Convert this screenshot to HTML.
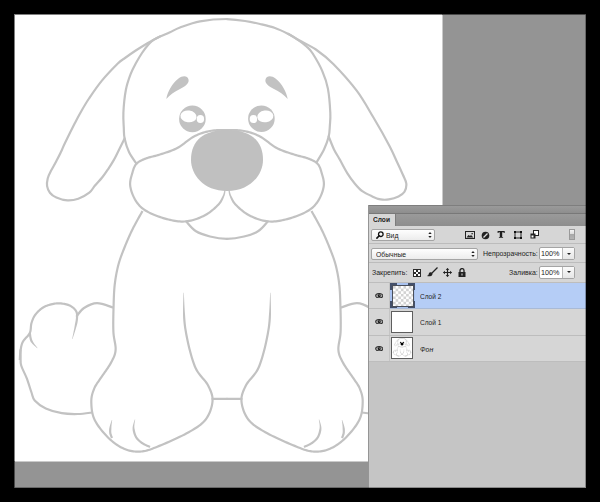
<!DOCTYPE html>
<html><head><meta charset="utf-8">
<style>
*{margin:0;padding:0;box-sizing:border-box}
html,body{width:600px;height:502px;overflow:hidden;background:#000;font-family:"Liberation Sans",sans-serif}
.a{position:absolute}
#ws{left:14px;top:14px;width:572px;height:474px;background:#949494}
#cv{left:14px;top:14px;width:428px;height:447px;background:#fff}
#dog{left:0;top:0}
#panel{left:368px;top:205px;width:218px;height:283px;background:#c5c5c5;overflow:hidden}
#panel .t{position:absolute;white-space:nowrap;color:#222;font-size:7.5px;line-height:10px;transform-origin:0 0}
.box{position:absolute;border:1px solid #a4a4a4;border-radius:2px;background:linear-gradient(#fefefe,#ececec)}
.sep{position:absolute;left:1px;width:217px;height:1px;background:#bcbcbc}
.row{position:absolute;left:1px;width:217px;height:26px;background:#d6d6d6;border-bottom:1px solid #bdbdbd}
.eyecol{position:absolute;left:0;top:0;width:21px;height:25px;background:#d6d6d6;border-right:1px solid #c4c4c4}
.thumb{position:absolute;left:22px;top:2px;width:22px;height:22px;border:1px solid #5e5e5e;background:#fff;overflow:hidden}
.eye{position:absolute;left:5.5px;top:9.5px;width:8.5px;height:5.5px}
#wrap{position:absolute;left:0;top:0;width:600px;height:502px;background:#000}
</style></head><body><div id="wrap">
<div class="a" id="ws"></div>
<div class="a" id="cv"></div>
<svg class="a" id="dog" width="600" height="502" viewBox="0 0 600 502">
<defs><clipPath id="cp"><rect x="15" y="15" width="427" height="446"/></clipPath>
<g id="half">
<path d="M227.00,128.90 L225.58,128.90 L224.15,128.90 L222.72,128.90 L221.28,128.92 L219.84,128.95 L218.39,128.99 L216.95,129.06 L215.51,129.16 L214.07,129.29 L212.63,129.46 L211.21,129.67 L209.79,129.92 L208.40,130.21 L207.03,130.52 L205.67,130.85 L204.32,131.22 L202.97,131.62 L201.63,132.05 L200.29,132.52 L198.94,133.03 L197.60,133.59 L196.24,134.18 L194.87,134.83 L193.48,135.53 L192.07,136.32 L190.65,137.21 L189.24,138.18 L187.83,139.20 L186.43,140.25 L185.02,141.33 L183.63,142.40 L182.24,143.45 L180.86,144.45 L179.48,145.40 L178.13,146.26 L176.78,147.03 L175.42,147.73 L174.04,148.37 L172.65,148.98 L171.26,149.54 L169.86,150.07 L168.46,150.57 L167.07,151.04 L165.68,151.50 L164.30,151.95 L162.93,152.38 L161.58,152.82 L160.26,153.25 L158.96,153.67 L157.67,154.05 L156.37,154.41 L155.08,154.75 L153.79,155.08 L152.52,155.40 L151.27,155.72 L150.05,156.04 L148.85,156.37 L147.69,156.72 L146.57,157.08 L145.51,157.47 L144.51,157.86 L143.56,158.24 L142.63,158.62 L141.74,159.00 L140.88,159.39 L140.04,159.80 L139.24,160.23 L138.46,160.69 L137.72,161.19 L137.01,161.72 L136.33,162.31 L135.69,162.95 L135.10,163.64 L134.57,164.37 L134.09,165.12 L133.66,165.90 L133.27,166.70 L132.92,167.53 L132.60,168.37 L132.31,169.23 L132.03,170.10 L131.76,170.99 L131.50,171.89 L131.24,172.79 L130.97,173.72 L130.69,174.68 L130.40,175.68 L130.11,176.70 L129.83,177.76 L129.58,178.84 L129.36,179.95 L129.18,181.09 L129.06,182.25 L129.00,183.42 L129.01,184.62 L129.11,185.82 L129.28,187.04 L129.52,188.29 L129.82,189.58 L130.17,190.88 L130.58,192.19 L131.03,193.51 L131.53,194.81 L132.07,196.10 L132.65,197.37 L133.26,198.59 L133.90,199.76 L134.56,200.88 L135.23,201.93 L135.91,202.94 L136.61,203.92 L137.34,204.87 L138.11,205.80 L138.93,206.70 L139.80,207.58 L140.74,208.44 L141.76,209.29 L142.86,210.12 L144.05,210.93 L145.34,211.74 L146.75,212.55 L148.30,213.36 L149.96,214.17 L151.71,214.96 L153.53,215.73 L155.40,216.49 L157.30,217.21 L159.21,217.90 L161.10,218.54 L162.97,219.14 L164.78,219.68 L166.52,220.16 L168.20,220.60 L169.86,221.00 L171.51,221.37 L173.15,221.70 L174.78,221.98 L176.40,222.23 L178.02,222.42 L179.64,222.56 L181.25,222.64 L182.87,222.66 L184.49,222.61 L186.11,222.49 L187.74,222.30 L189.38,222.03 L191.04,221.68 L192.69,221.27 L194.33,220.81 L195.95,220.29 L197.56,219.73 L199.13,219.13 L200.67,218.50 L202.17,217.85 L203.61,217.17 L205.01,216.48 L206.37,215.74 L207.71,214.93 L209.03,214.07 L210.31,213.18 L211.55,212.25 L212.76,211.30 L213.91,210.34 L215.01,209.38 L216.05,208.44 L217.03,207.51 L217.95,206.62 L218.79,205.76 L219.58,204.91 L220.29,204.06 L220.93,203.22 L221.50,202.38 L222.00,201.55 L222.42,200.72 L222.80,199.92 L223.15,199.15 L223.46,198.40 L223.75,197.69 L224.02,197.01 L224.28,196.35 L224.54,195.69 L224.76,195.02 L224.94,194.37 L225.08,193.74 L225.19,193.14 L225.28,192.57 L225.36,192.03 L225.41,191.54 L225.46,191.10 L225.50,190.72 L225.54,190.39 L225.59,190.13 L224.41,189.87 L224.34,190.17 L224.26,190.52 L224.19,190.91 L224.11,191.34 L224.01,191.81 L223.90,192.31 L223.77,192.83 L223.62,193.37 L223.45,193.93 L223.24,194.50 L223.00,195.07 L222.72,195.65 L222.40,196.27 L222.07,196.93 L221.73,197.61 L221.37,198.30 L220.99,199.00 L220.58,199.71 L220.12,200.44 L219.65,201.18 L219.14,201.93 L218.56,202.69 L217.93,203.46 L217.21,204.24 L216.40,205.06 L215.51,205.92 L214.56,206.82 L213.55,207.74 L212.48,208.66 L211.37,209.59 L210.21,210.50 L209.02,211.39 L207.80,212.25 L206.55,213.07 L205.28,213.83 L203.99,214.52 L202.66,215.19 L201.26,215.84 L199.81,216.48 L198.33,217.09 L196.80,217.67 L195.26,218.21 L193.69,218.70 L192.12,219.15 L190.55,219.54 L188.98,219.86 L187.43,220.12 L185.89,220.31 L184.37,220.42 L182.85,220.46 L181.32,220.44 L179.79,220.37 L178.25,220.23 L176.70,220.05 L175.13,219.81 L173.56,219.53 L171.96,219.21 L170.36,218.85 L168.73,218.46 L167.08,218.04 L165.39,217.57 L163.62,217.04 L161.79,216.45 L159.93,215.82 L158.06,215.15 L156.20,214.44 L154.37,213.70 L152.59,212.94 L150.89,212.17 L149.29,211.40 L147.81,210.62 L146.46,209.86 L145.25,209.10 L144.14,208.33 L143.13,207.56 L142.19,206.79 L141.33,205.99 L140.52,205.19 L139.77,204.36 L139.06,203.50 L138.38,202.61 L137.72,201.69 L137.08,200.72 L136.44,199.72 L135.81,198.68 L135.21,197.57 L134.64,196.42 L134.09,195.22 L133.58,194.00 L133.10,192.76 L132.67,191.51 L132.29,190.26 L131.95,189.04 L131.67,187.84 L131.45,186.68 L131.29,185.58 L131.21,184.52 L131.20,183.47 L131.25,182.42 L131.36,181.38 L131.53,180.34 L131.73,179.31 L131.97,178.29 L132.23,177.28 L132.51,176.28 L132.80,175.30 L133.08,174.34 L133.36,173.41 L133.62,172.50 L133.87,171.61 L134.13,170.75 L134.40,169.92 L134.67,169.12 L134.96,168.35 L135.28,167.61 L135.62,166.91 L135.98,166.24 L136.38,165.61 L136.82,165.01 L137.31,164.45 L137.83,163.92 L138.40,163.43 L139.00,162.98 L139.64,162.55 L140.32,162.14 L141.05,161.75 L141.81,161.38 L142.62,161.01 L143.48,160.65 L144.38,160.28 L145.32,159.91 L146.29,159.53 L147.29,159.16 L148.35,158.82 L149.46,158.49 L150.62,158.17 L151.82,157.85 L153.06,157.54 L154.34,157.21 L155.63,156.88 L156.95,156.54 L158.28,156.17 L159.61,155.77 L160.94,155.35 L162.26,154.91 L163.60,154.48 L164.97,154.04 L166.36,153.59 L167.77,153.13 L169.19,152.64 L170.62,152.13 L172.06,151.59 L173.50,151.00 L174.95,150.38 L176.39,149.70 L177.82,148.97 L179.26,148.15 L180.70,147.23 L182.13,146.25 L183.55,145.21 L184.96,144.15 L186.36,143.07 L187.76,142.01 L189.14,140.97 L190.51,139.97 L191.86,139.05 L193.19,138.21 L194.52,137.47 L195.84,136.81 L197.15,136.18 L198.46,135.61 L199.75,135.08 L201.04,134.59 L202.33,134.14 L203.62,133.72 L204.92,133.34 L206.22,132.98 L207.54,132.66 L208.87,132.36 L210.21,132.08 L211.56,131.84 L212.92,131.64 L214.29,131.48 L215.68,131.36 L217.08,131.26 L218.48,131.19 L219.89,131.15 L221.31,131.12 L222.73,131.10 L224.16,131.10 L225.58,131.10 L227.00,131.10Z" fill="#c2c2c2" stroke="none"/>
<path d="M186.4,221.6 C188.7,224.3 192.1,228.8 196.0,231.3 C199.9,233.8 204.8,235.2 210.0,236.5 C215.2,237.8 221.3,238.8 227.0,238.8"/>
<path d="M141.54,210.47 L141.06,211.32 L140.46,212.39 L139.75,213.65 L138.95,215.05 L138.08,216.59 L137.17,218.22 L136.22,219.92 L135.26,221.65 L134.31,223.40 L133.39,225.13 L132.52,226.81 L131.71,228.41 L130.95,229.98 L130.19,231.57 L129.44,233.18 L128.70,234.81 L127.97,236.44 L127.25,238.08 L126.54,239.71 L125.85,241.33 L125.18,242.94 L124.52,244.52 L123.89,246.07 L123.28,247.59 L122.69,249.07 L122.12,250.50 L121.57,251.91 L121.04,253.29 L120.52,254.66 L120.02,256.02 L119.53,257.38 L119.06,258.76 L118.61,260.15 L118.17,261.57 L117.74,263.02 L117.34,264.52 L116.94,266.04 L116.57,267.58 L116.21,269.14 L115.86,270.71 L115.54,272.30 L115.23,273.90 L114.93,275.52 L114.65,277.16 L114.39,278.82 L114.15,280.49 L113.92,282.17 L113.71,283.87 L113.52,285.58 L113.35,287.30 L113.21,289.02 L113.09,290.75 L112.98,292.49 L112.89,294.25 L112.81,296.04 L112.74,297.85 L112.67,299.70 L112.61,301.58 L112.56,303.50 L112.50,305.47 L112.44,307.52 L112.38,309.67 L112.32,311.90 L112.27,314.19 L112.22,316.51 L112.19,318.84 L112.16,321.16 L112.15,323.45 L112.16,325.69 L112.18,327.85 L112.23,329.91 L112.30,331.86 L112.43,333.71 L112.62,335.50 L112.86,337.21 L113.13,338.85 L113.41,340.43 L113.70,341.94 L113.97,343.39 L114.20,344.79 L114.39,346.14 L114.51,347.44 L114.55,348.69 L114.50,349.92 L114.38,351.11 L114.20,352.23 L113.97,353.28 L113.70,354.28 L113.38,355.25 L113.02,356.21 L112.61,357.16 L112.15,358.12 L111.66,359.12 L111.12,360.15 L110.54,361.23 L109.93,362.37 L109.27,363.56 L108.52,364.81 L107.69,366.11 L106.80,367.45 L105.86,368.81 L104.91,370.17 L103.94,371.53 L102.99,372.88 L102.05,374.19 L101.16,375.45 L100.33,376.66 L99.58,377.79 L98.90,378.82 L98.25,379.77 L97.63,380.67 L97.04,381.52 L96.46,382.34 L95.91,383.14 L95.38,383.95 L94.87,384.76 L94.39,385.61 L93.93,386.48 L93.49,387.41 L93.08,388.39 L92.69,389.38 L92.32,390.38 L91.96,391.39 L91.62,392.42 L91.31,393.47 L91.02,394.55 L90.77,395.66 L90.56,396.81 L90.39,397.99 L90.27,399.22 L90.21,400.50 L90.20,401.81 L90.23,403.16 L90.28,404.57 L90.35,406.04 L90.46,407.56 L90.62,409.11 L90.82,410.71 L91.09,412.32 L91.44,413.95 L91.86,415.59 L92.37,417.24 L92.99,418.87 L93.71,420.48 L94.56,422.10 L95.53,423.76 L96.62,425.44 L97.79,427.14 L99.04,428.83 L100.35,430.51 L101.71,432.16 L103.09,433.77 L104.48,435.33 L105.86,436.81 L107.22,438.20 L108.54,439.50 L109.85,440.71 L111.17,441.87 L112.52,442.98 L113.87,444.02 L115.23,445.02 L116.61,445.95 L117.99,446.83 L119.37,447.64 L120.75,448.40 L122.14,449.10 L123.52,449.74 L124.89,450.32 L126.27,450.84 L127.65,451.29 L129.03,451.67 L130.41,451.99 L131.78,452.25 L133.16,452.45 L134.54,452.60 L135.91,452.69 L137.28,452.74 L138.65,452.74 L140.02,452.69 L141.39,452.60 L142.72,452.46 L143.98,452.29 L145.20,452.07 L146.40,451.81 L147.59,451.49 L148.80,451.12 L150.05,450.70 L151.36,450.23 L152.76,449.69 L154.26,449.10 L155.91,448.44 L157.71,447.72 L159.73,446.90 L161.97,445.98 L164.39,444.97 L166.94,443.88 L169.59,442.73 L172.29,441.54 L174.99,440.31 L177.67,439.07 L180.27,437.83 L182.76,436.61 L185.10,435.41 L187.23,434.26 L189.20,433.17 L191.10,432.10 L192.93,431.04 L194.69,430.00 L196.38,428.95 L198.00,427.89 L199.55,426.81 L201.03,425.69 L202.43,424.53 L203.75,423.32 L204.99,422.04 L206.16,420.69 L207.24,419.26 L208.23,417.74 L209.14,416.17 L209.97,414.54 L210.71,412.88 L211.38,411.20 L211.95,409.51 L212.45,407.82 L212.86,406.15 L213.19,404.52 L213.44,402.92 L213.60,401.38 L213.66,399.89 L213.63,398.45 L213.49,397.05 L213.27,395.68 L212.96,394.33 L212.58,393.00 L212.12,391.68 L211.60,390.36 L211.02,389.02 L210.39,387.65 L209.71,386.25 L208.97,384.78 L208.12,383.29 L207.14,381.84 L206.06,380.46 L204.91,379.10 L203.72,377.73 L202.50,376.32 L201.27,374.86 L200.06,373.30 L198.88,371.63 L197.75,369.80 L196.69,367.80 L195.72,365.59 L194.79,363.10 L193.85,360.35 L192.93,357.39 L192.02,354.26 L191.14,350.99 L190.29,347.63 L189.48,344.21 L188.72,340.77 L188.01,337.36 L187.36,334.01 L186.79,330.75 L186.29,327.64 L185.88,324.53 L185.55,321.27 L185.30,317.91 L185.04,314.52 L184.78,311.15 L184.57,307.85 L184.40,304.67 L184.26,301.68 L184.14,298.93 L184.02,296.48 L183.92,294.38 L183.80,292.69 L183.40,292.71 L183.39,294.39 L183.34,296.49 L183.27,298.94 L183.19,301.69 L183.10,304.69 L183.04,307.88 L183.00,311.21 L183.00,314.62 L183.11,318.05 L183.36,321.46 L183.69,324.78 L184.11,327.96 L184.62,331.12 L185.20,334.41 L185.85,337.79 L186.57,341.23 L187.33,344.70 L188.15,348.15 L189.01,351.54 L189.90,354.85 L190.82,358.02 L191.76,361.03 L192.71,363.84 L193.68,366.41 L194.71,368.76 L195.84,370.89 L197.05,372.84 L198.29,374.61 L199.56,376.24 L200.83,377.75 L202.06,379.17 L203.24,380.53 L204.35,381.84 L205.36,383.14 L206.25,384.45 L207.03,385.82 L207.73,387.23 L208.40,388.60 L209.01,389.92 L209.57,391.20 L210.06,392.45 L210.48,393.67 L210.84,394.89 L211.11,396.10 L211.31,397.33 L211.43,398.58 L211.46,399.87 L211.40,401.22 L211.26,402.64 L211.03,404.13 L210.72,405.67 L210.33,407.25 L209.86,408.84 L209.31,410.44 L208.69,412.03 L207.99,413.59 L207.21,415.12 L206.36,416.59 L205.44,417.99 L204.44,419.31 L203.37,420.55 L202.22,421.74 L200.98,422.87 L199.66,423.97 L198.26,425.03 L196.77,426.07 L195.20,427.10 L193.55,428.12 L191.82,429.14 L190.01,430.18 L188.13,431.25 L186.17,432.34 L184.07,433.47 L181.78,434.64 L179.32,435.85 L176.74,437.08 L174.08,438.31 L171.39,439.53 L168.71,440.71 L166.07,441.86 L163.53,442.94 L161.13,443.95 L158.90,444.87 L156.89,445.68 L155.09,446.40 L153.45,447.06 L151.96,447.64 L150.59,448.17 L149.32,448.63 L148.13,449.03 L146.99,449.37 L145.88,449.67 L144.77,449.92 L143.64,450.12 L142.46,450.28 L141.21,450.40 L139.91,450.49 L138.61,450.54 L137.32,450.54 L136.02,450.50 L134.73,450.41 L133.44,450.27 L132.15,450.08 L130.86,449.84 L129.57,449.54 L128.28,449.18 L127.00,448.76 L125.71,448.28 L124.41,447.73 L123.10,447.12 L121.78,446.46 L120.46,445.73 L119.14,444.95 L117.82,444.11 L116.50,443.22 L115.19,442.26 L113.89,441.26 L112.60,440.19 L111.32,439.08 L110.06,437.90 L108.78,436.65 L107.45,435.29 L106.10,433.84 L104.74,432.32 L103.39,430.75 L102.07,429.14 L100.79,427.50 L99.58,425.86 L98.44,424.22 L97.41,422.60 L96.48,421.03 L95.69,419.52 L95.02,418.03 L94.45,416.52 L93.97,414.99 L93.58,413.45 L93.26,411.91 L93.00,410.38 L92.80,408.86 L92.66,407.37 L92.55,405.90 L92.48,404.48 L92.43,403.10 L92.40,401.79 L92.40,400.56 L92.46,399.38 L92.57,398.25 L92.73,397.16 L92.92,396.10 L93.16,395.07 L93.42,394.07 L93.72,393.08 L94.04,392.10 L94.39,391.13 L94.75,390.17 L95.12,389.21 L95.50,388.31 L95.90,387.47 L96.32,386.67 L96.76,385.89 L97.24,385.13 L97.74,384.37 L98.27,383.59 L98.84,382.78 L99.44,381.93 L100.07,381.02 L100.73,380.05 L101.42,379.01 L102.16,377.89 L102.97,376.71 L103.85,375.46 L104.78,374.15 L105.74,372.81 L106.71,371.44 L107.67,370.06 L108.62,368.68 L109.53,367.31 L110.38,365.97 L111.17,364.67 L111.87,363.43 L112.48,362.27 L113.07,361.17 L113.62,360.12 L114.13,359.08 L114.61,358.06 L115.06,357.03 L115.46,355.99 L115.81,354.91 L116.11,353.80 L116.36,352.63 L116.56,351.40 L116.70,350.08 L116.75,348.70 L116.70,347.30 L116.57,345.89 L116.38,344.46 L116.13,343.01 L115.86,341.54 L115.58,340.03 L115.29,338.47 L115.03,336.88 L114.80,335.23 L114.62,333.52 L114.50,331.74 L114.43,329.84 L114.38,327.81 L114.36,325.67 L114.35,323.46 L114.36,321.18 L114.39,318.87 L114.42,316.55 L114.47,314.23 L114.52,311.95 L114.58,309.73 L114.64,307.58 L114.70,305.53 L114.76,303.57 L114.81,301.65 L114.87,299.77 L114.94,297.93 L115.01,296.13 L115.09,294.36 L115.18,292.61 L115.28,290.89 L115.40,289.19 L115.55,287.49 L115.71,285.81 L115.89,284.13 L116.10,282.45 L116.32,280.79 L116.56,279.15 L116.82,277.52 L117.10,275.91 L117.39,274.31 L117.69,272.73 L118.02,271.17 L118.36,269.62 L118.71,268.09 L119.08,266.58 L119.46,265.08 L119.86,263.62 L120.27,262.20 L120.70,260.82 L121.15,259.46 L121.61,258.11 L122.08,256.77 L122.58,255.43 L123.09,254.07 L123.62,252.71 L124.17,251.31 L124.74,249.88 L125.32,248.41 L125.93,246.90 L126.56,245.35 L127.21,243.78 L127.88,242.19 L128.56,240.58 L129.26,238.96 L129.98,237.34 L130.71,235.72 L131.44,234.11 L132.19,232.51 L132.93,230.93 L133.69,229.39 L134.48,227.81 L135.34,226.15 L136.25,224.44 L137.19,222.71 L138.14,220.98 L139.08,219.29 L140.00,217.67 L140.86,216.14 L141.66,214.73 L142.38,213.47 L142.98,212.40 L143.46,211.53Z" fill="#c2c2c2" stroke="none"/>
<path d="M212.5,398.9 C214.9,398.9 224.6,398.9 227.0,398.9"/>
<path d="M76.8,316.0 C78.0,314.7 80.6,310.1 84.0,308.0 C87.4,305.9 92.2,303.3 97.0,303.2 C101.8,303.1 110.3,306.8 113.0,307.5"/>
<path d="M20.90,360.06 L20.95,359.15 L21.00,358.26 L21.04,357.38 L21.08,356.52 L21.13,355.68 L21.18,354.85 L21.23,354.04 L21.30,353.24 L21.37,352.46 L21.46,351.69 L21.56,350.93 L21.69,350.18 L21.81,349.42 L21.94,348.68 L22.07,347.97 L22.20,347.27 L22.34,346.59 L22.49,345.92 L22.67,345.27 L22.86,344.62 L23.08,343.97 L23.34,343.33 L23.63,342.68 L23.96,342.04 L24.34,341.41 L24.81,340.78 L25.34,340.13 L25.94,339.47 L26.58,338.79 L27.24,338.10 L27.91,337.40 L28.57,336.67 L29.21,335.92 L29.81,335.14 L30.34,334.32 L30.80,333.46 L31.15,332.57 L31.42,331.67 L31.61,330.77 L31.75,329.87 L31.85,328.97 L31.92,328.08 L31.98,327.22 L32.05,326.37 L32.13,325.55 L32.23,324.77 L32.37,324.03 L32.56,323.30 L32.79,322.57 L33.03,321.83 L33.27,321.11 L33.53,320.41 L33.79,319.72 L34.08,319.04 L34.39,318.37 L34.72,317.72 L35.08,317.08 L35.47,316.44 L35.90,315.81 L36.37,315.17 L36.89,314.52 L37.44,313.86 L38.03,313.20 L38.64,312.54 L39.28,311.89 L39.95,311.25 L40.65,310.63 L41.37,310.04 L42.12,309.47 L42.89,308.93 L43.69,308.43 L44.51,307.97 L45.38,307.54 L46.31,307.12 L47.29,306.72 L48.30,306.35 L49.35,306.00 L50.41,305.68 L51.49,305.39 L52.58,305.13 L53.66,304.91 L54.72,304.73 L55.77,304.59 L56.78,304.50 L57.79,304.45 L58.82,304.44 L59.87,304.48 L60.93,304.55 L61.99,304.66 L63.04,304.80 L64.07,304.97 L65.07,305.18 L66.03,305.41 L66.95,305.66 L67.81,305.93 L68.59,306.22 L69.32,306.54 L70.02,306.89 L70.68,307.28 L71.32,307.69 L71.92,308.14 L72.49,308.61 L73.02,309.09 L73.51,309.59 L73.96,310.09 L74.37,310.59 L74.74,311.09 L75.06,311.58 L75.32,312.03 L75.52,312.48 L75.68,312.93 L75.80,313.39 L75.89,313.87 L75.95,314.37 L75.98,314.89 L75.99,315.45 L75.98,316.03 L75.96,316.64 L75.93,317.28 L75.90,317.94 L75.86,318.60 L75.79,319.28 L75.71,319.98 L75.60,320.70 L75.47,321.44 L75.32,322.20 L75.16,322.98 L75.02,323.79 L74.88,324.62 L74.74,325.46 L74.59,326.33 L74.45,327.21 L74.29,328.14 L74.10,329.16 L73.89,330.25 L73.67,331.37 L73.44,332.52 L73.21,333.66 L72.98,334.76 L72.76,335.81 L72.56,336.78 L72.38,337.64 L72.22,338.37 L72.11,338.95 L72.49,339.05 L72.67,338.49 L72.91,337.78 L73.18,336.95 L73.49,336.01 L73.83,334.99 L74.18,333.92 L74.54,332.81 L74.90,331.69 L75.25,330.59 L75.58,329.52 L75.88,328.52 L76.15,327.59 L76.40,326.74 L76.64,325.89 L76.88,325.06 L77.11,324.24 L77.31,323.43 L77.48,322.63 L77.63,321.83 L77.77,321.05 L77.88,320.28 L77.98,319.53 L78.05,318.78 L78.10,318.06 L78.13,317.38 L78.16,316.72 L78.18,316.08 L78.19,315.44 L78.18,314.81 L78.14,314.18 L78.07,313.55 L77.95,312.92 L77.79,312.29 L77.57,311.66 L77.28,311.03 L76.94,310.42 L76.54,309.83 L76.11,309.24 L75.63,308.66 L75.11,308.07 L74.54,307.50 L73.93,306.94 L73.27,306.41 L72.58,305.89 L71.84,305.41 L71.07,304.95 L70.25,304.54 L69.41,304.18 L68.52,303.85 L67.57,303.55 L66.58,303.28 L65.54,303.03 L64.47,302.81 L63.37,302.63 L62.25,302.47 L61.12,302.36 L59.98,302.28 L58.85,302.24 L57.73,302.25 L56.62,302.30 L55.52,302.41 L54.39,302.55 L53.25,302.75 L52.10,302.98 L50.95,303.25 L49.81,303.56 L48.68,303.90 L47.57,304.27 L46.49,304.67 L45.44,305.10 L44.44,305.55 L43.49,306.03 L42.57,306.54 L41.68,307.09 L40.83,307.69 L40.01,308.31 L39.22,308.96 L38.46,309.63 L37.74,310.32 L37.05,311.02 L36.39,311.72 L35.77,312.43 L35.19,313.13 L34.63,313.83 L34.11,314.53 L33.62,315.24 L33.18,315.96 L32.78,316.69 L32.41,317.42 L32.07,318.15 L31.76,318.89 L31.47,319.63 L31.19,320.38 L30.94,321.14 L30.69,321.90 L30.44,322.70 L30.22,323.55 L30.06,324.42 L29.94,325.31 L29.86,326.18 L29.79,327.06 L29.73,327.92 L29.66,328.76 L29.57,329.58 L29.45,330.37 L29.29,331.13 L29.07,331.86 L28.80,332.54 L28.45,333.20 L28.01,333.87 L27.50,334.54 L26.92,335.22 L26.30,335.90 L25.65,336.58 L24.98,337.28 L24.32,337.98 L23.68,338.69 L23.07,339.42 L22.52,340.18 L22.04,340.96 L21.65,341.73 L21.31,342.47 L21.02,343.21 L20.77,343.94 L20.55,344.67 L20.36,345.39 L20.19,346.12 L20.04,346.84 L19.90,347.57 L19.77,348.31 L19.65,349.05 L19.51,349.82 L19.39,350.61 L19.28,351.42 L19.19,352.23 L19.11,353.05 L19.04,353.88 L18.98,354.71 L18.93,355.55 L18.89,356.41 L18.84,357.27 L18.80,358.14 L18.75,359.03 L18.70,359.94Z" fill="#c2c2c2" stroke="none"/>
<path d="M28.72,333.19 L28.78,333.56 L28.85,334.02 L28.92,334.59 L29.00,335.25 L29.09,335.96 L29.20,336.72 L29.33,337.52 L29.49,338.33 L29.68,339.15 L29.91,339.96 L30.19,340.74 L30.51,341.49 L30.96,342.19 L31.50,342.87 L32.10,343.54 L32.73,344.20 L33.39,344.84 L34.05,345.46 L34.70,346.05 L35.32,346.60 L35.89,347.10 L36.40,347.54 L36.82,347.92 L37.15,348.23 L37.45,347.97 L37.19,347.60 L36.84,347.13 L36.43,346.59 L35.97,345.99 L35.48,345.33 L34.96,344.64 L34.45,343.92 L33.96,343.20 L33.50,342.47 L33.09,341.77 L32.75,341.10 L32.49,340.51 L32.23,339.94 L32.01,339.29 L31.81,338.60 L31.64,337.87 L31.50,337.13 L31.37,336.39 L31.27,335.66 L31.18,334.97 L31.10,334.32 L31.03,333.74 L30.96,333.22 L30.88,332.81Z" fill="#c2c2c2" stroke="none"/>
<path d="M20.5,350.0 C20.5,351.2 20.5,354.4 20.6,357.0 C20.7,359.6 20.2,362.0 21.2,365.5 C22.2,369.0 25.0,373.7 26.7,378.2 C28.4,382.7 30.2,388.8 31.5,392.5 C32.8,396.2 32.3,397.8 34.7,400.5 C37.1,403.2 41.3,406.4 45.8,408.5 C50.3,410.6 56.5,412.3 61.8,413.2 C67.1,414.1 72.7,414.1 77.7,414.0 C82.7,413.9 89.6,412.8 92.0,412.5"/>
<path d="M111.80,419.96 L111.69,420.29 L111.55,420.71 L111.38,421.20 L111.18,421.76 L110.97,422.37 L110.75,423.01 L110.53,423.67 L110.31,424.34 L110.10,425.01 L109.91,425.67 L109.74,426.29 L109.59,426.88 L109.47,427.42 L109.35,427.96 L109.24,428.49 L109.17,429.02 L109.13,429.55 L109.10,430.08 L109.08,430.60 L109.08,431.11 L109.09,431.63 L109.11,432.14 L109.15,432.65 L109.21,433.16 L109.30,433.69 L109.43,434.22 L109.58,434.76 L109.75,435.28 L109.93,435.79 L110.11,436.27 L110.30,436.74 L110.47,437.16 L110.64,437.55 L110.78,437.89 L110.89,438.16 L110.97,438.38 L113.03,437.62 L112.94,437.36 L112.81,437.05 L112.66,436.70 L112.50,436.32 L112.34,435.91 L112.16,435.48 L111.99,435.03 L111.83,434.57 L111.68,434.12 L111.56,433.67 L111.46,433.25 L111.39,432.84 L111.34,432.43 L111.31,432.00 L111.29,431.56 L111.28,431.11 L111.28,430.65 L111.30,430.17 L111.33,429.69 L111.36,429.20 L111.39,428.70 L111.39,428.18 L111.40,427.66 L111.41,427.12 L111.43,426.57 L111.47,425.95 L111.53,425.30 L111.60,424.62 L111.68,423.93 L111.77,423.24 L111.86,422.58 L111.94,421.94 L112.02,421.36 L112.09,420.84 L112.15,420.39 L112.20,420.04Z" fill="#c2c2c2" stroke="none"/>
<path d="M134.80,419.46 L134.69,419.86 L134.52,420.35 L134.32,420.93 L134.09,421.59 L133.85,422.31 L133.60,423.07 L133.35,423.88 L133.12,424.70 L132.92,425.54 L132.76,426.39 L132.64,427.23 L132.59,428.04 L132.59,428.83 L132.62,429.64 L132.68,430.47 L132.83,431.29 L133.01,432.12 L133.22,432.94 L133.46,433.76 L133.72,434.57 L134.01,435.35 L134.33,436.11 L134.67,436.85 L135.04,437.54 L135.45,438.21 L135.89,438.84 L136.35,439.45 L136.85,440.03 L137.36,440.58 L137.90,441.11 L138.45,441.62 L139.02,442.10 L139.59,442.57 L140.18,443.03 L140.77,443.47 L141.37,443.90 L142.03,444.35 L142.76,444.78 L143.53,445.21 L144.32,445.61 L145.12,446.00 L145.91,446.37 L146.68,446.72 L147.41,447.04 L148.07,447.34 L148.66,447.59 L149.15,447.81 L149.53,447.99 L150.47,446.01 L150.07,445.81 L149.55,445.58 L148.96,445.32 L148.30,445.03 L147.58,444.71 L146.84,444.38 L146.07,444.02 L145.31,443.65 L144.56,443.26 L143.86,442.87 L143.21,442.49 L142.63,442.10 L142.07,441.69 L141.51,441.28 L140.96,440.85 L140.43,440.42 L139.91,439.97 L139.41,439.52 L138.94,439.05 L138.49,438.56 L138.06,438.06 L137.66,437.55 L137.29,437.01 L136.96,436.46 L136.64,435.86 L136.34,435.22 L136.06,434.55 L135.80,433.84 L135.56,433.11 L135.34,432.37 L135.15,431.61 L134.99,430.86 L134.84,430.10 L134.67,429.37 L134.52,428.65 L134.41,427.96 L134.34,427.27 L134.32,426.52 L134.34,425.74 L134.40,424.93 L134.48,424.11 L134.59,423.30 L134.71,422.52 L134.84,421.78 L134.95,421.10 L135.06,420.49 L135.14,419.96 L135.20,419.54Z" fill="#c2c2c2" stroke="none"/>
</g>
<g id="dogstroke"><use href="#half"/><use href="#half" transform="translate(454,0) scale(-1,1)"/>
<path d="M160.0,36.5 C157.2,37.8 155.0,38.8 153.0,40.2 C151.0,41.6 149.8,42.9 148.0,45.0 C146.2,47.1 144.0,50.0 142.0,53.0 C140.0,56.0 137.9,59.5 136.0,63.0 C134.1,66.5 132.3,69.7 130.6,74.2 C128.9,78.7 127.0,83.8 125.8,90.2 C124.6,96.6 123.7,106.2 123.4,112.5 C123.1,118.8 123.6,123.7 123.8,128.0 C124.0,132.3 123.7,134.4 124.6,138.4 C125.5,142.4 127.0,147.8 129.0,152.0 C131.0,156.2 135.2,161.8 136.5,163.7"/>
<path d="M227.0,19.0 C218.0,19.0 207.8,19.9 200.0,21.3 C192.2,22.7 185.0,25.7 180.0,27.5 C175.0,29.3 173.3,30.8 170.0,32.3 C166.7,33.8 162.8,35.2 160.0,36.5 C157.2,37.8 155.5,38.8 153.0,40.2 C150.5,41.6 148.0,42.9 145.0,44.7 C142.0,46.5 138.3,48.8 135.0,51.0 C131.7,53.2 127.9,55.9 125.0,58.0 C122.1,60.1 121.6,59.7 117.8,63.5 C114.0,67.3 106.7,74.8 101.9,80.6 C97.1,86.4 92.7,93.0 89.0,98.5 C85.3,104.0 82.3,109.4 80.0,113.5 C77.7,117.6 77.4,118.2 74.9,123.1 C72.4,128.0 67.3,138.2 65.1,142.7 C62.9,147.2 63.3,146.9 61.9,150.0 C60.5,153.1 58.2,157.5 56.4,161.0 C54.6,164.5 52.5,167.9 51.0,170.8 C49.5,173.7 48.4,175.9 47.7,178.5 C47.1,181.1 46.7,183.7 47.1,186.1 C47.5,188.5 48.4,190.8 49.9,192.7 C51.4,194.6 53.5,196.3 56.4,197.6 C59.3,198.9 63.8,200.2 67.4,200.4 C71.1,200.6 74.7,200.0 78.3,198.7 C81.9,197.4 86.5,194.9 89.3,192.7 C92.1,190.5 92.9,188.0 95.0,185.5 C97.1,183.0 99.8,180.5 101.9,177.8 C104.1,175.1 105.9,172.4 107.9,169.4 C109.9,166.4 111.9,163.5 113.9,159.9 C115.9,156.3 118.1,151.5 119.9,147.9 C121.7,144.3 123.8,140.0 124.6,138.4"/>
<path d="M288.0,33.8 C292.0,35.9 295.9,38.5 299.0,40.6 C302.1,42.7 304.2,44.4 306.5,46.5 C308.8,48.6 310.1,49.4 312.7,53.5 C315.3,57.6 319.8,65.2 322.3,71.1 C324.8,76.9 326.6,81.7 327.9,88.6 C329.2,95.5 330.0,106.4 330.3,112.5 C330.6,118.6 330.2,121.0 329.9,125.0 C329.6,129.0 329.7,132.4 328.7,136.5 C327.7,140.6 326.0,145.2 324.0,149.5 C322.0,153.8 317.9,159.9 316.7,162.0"/>
<path d="M227.0,19.2 C233.0,19.5 239.5,20.2 245.0,21.0 C250.5,21.8 255.0,22.8 260.0,24.0 C265.0,25.2 270.3,26.4 275.0,28.0 C279.7,29.6 284.0,31.8 288.0,33.8 C292.0,35.8 294.4,37.6 299.0,40.2 C303.6,42.8 310.2,45.5 315.9,49.5 C321.6,53.5 326.5,57.1 333.3,64.0 C340.1,70.9 350.0,81.8 356.7,90.7 C363.4,99.6 367.8,108.1 373.3,117.3 C378.8,126.5 385.5,138.4 389.5,146.0 C393.5,153.6 395.2,158.2 397.5,163.0 C399.8,167.8 401.5,171.6 403.0,175.0 C404.5,178.4 406.1,180.7 406.3,183.5 C406.6,186.3 405.8,189.5 404.5,191.7 C403.2,193.8 401.1,195.1 398.5,196.4 C395.9,197.7 391.9,198.9 388.9,199.4 C385.9,199.9 383.4,199.9 380.6,199.4 C377.8,198.9 375.2,197.8 372.2,196.4 C369.1,195.0 365.2,193.3 362.3,191.2 C359.4,189.1 357.4,186.7 354.9,183.7 C352.4,180.7 349.9,177.3 347.4,173.3 C344.9,169.3 342.2,163.9 340.0,159.9 C337.8,155.9 335.9,153.3 334.0,149.4 C332.1,145.5 329.6,138.7 328.7,136.5"/>
</g>
<g id="halffill" fill="#c2c2c2" stroke="none">
<path d="M166.3,99 C167.5,92 172,83.5 178.5,78.5 C182.5,75.5 187.5,75.5 188.5,79.5 C189.5,83.5 185,86.5 180,89 C175,91.5 170,94.5 166.3,99 Z"/>
</g>
</defs>
<g clip-path="url(#cp)">
<g fill="none" stroke="#c2c2c2" stroke-width="2.2" stroke-linecap="round" stroke-linejoin="round">
<use href="#dogstroke"/>
</g>
<use href="#halffill"/>
<use href="#halffill" transform="translate(454,0) scale(-1,1)"/>
<!-- eyes -->
<g fill="#c2c2c2">
<circle cx="192.4" cy="118.9" r="13.3"/>
<circle cx="261.4" cy="118.7" r="13.3"/>
</g>
<g fill="#fff">
<ellipse cx="188.5" cy="116.4" rx="8.1" ry="5.9" transform="rotate(8 188.5 116.4)"/>
<ellipse cx="200.4" cy="119" rx="3.7" ry="4.1"/>
<ellipse cx="265.3" cy="116.4" rx="8.1" ry="5.9" transform="rotate(-8 265.3 116.4)"/>
<ellipse cx="253.4" cy="119" rx="3.7" ry="4.1"/>
</g>
<!-- nose -->
<path fill="#c0c0c0" d="M227,130 C250,130 263,140 263,160 C263,174 251,191 227,191 C203,191 191,174 191,160 C191,140 204,130 227,130 Z"/>
</g>
</svg>
<div class="a" id="panel">
<div class="a" style="left:0;top:0;width:1px;height:283px;background:#959595"></div>
<div class="a" style="left:1px;top:0;width:217px;height:8px;background:linear-gradient(#7e7e7e,#7e7e7e 1px,#9a9a9a 1px,#8e8e8e)"></div>
<div class="a" style="left:1px;top:8px;width:217px;height:1px;background:#787878"></div>
<div class="a" style="left:1px;top:9px;width:217px;height:12px;background:linear-gradient(#9a9a9a,#8d8d8d)"></div>
<div class="a" style="left:1px;top:9px;width:26px;height:12px;background:#d6d6d6"></div>
<div class="a" style="left:27px;top:9px;width:1px;height:12px;background:#7c7c7c"></div>
<div class="a" style="left:1px;top:21px;width:217px;height:57px;background:#d6d6d6"></div>
<div class="t" style="left:5px;top:10px;font-weight:bold;transform:scaleX(0.88)">Слои</div>
<!-- search row -->
<div class="box" style="left:3px;top:24px;width:64px;height:12px"></div>
<svg class="a" style="left:8px;top:26px" width="8" height="8" viewBox="0 0 8 8"><circle cx="4.8" cy="3.2" r="2.3" fill="none" stroke="#111" stroke-width="1.3"/><path d="M3.2,4.8 L0.9,7.1" stroke="#111" stroke-width="1.6" stroke-linecap="round"/></svg>
<div class="t" style="left:17.5px;top:26px;transform:scaleX(0.92)">Вид</div>
<svg class="a" style="left:60px;top:26px" width="4" height="8" viewBox="0 0 4 8"><path d="M0.3,3 L2,1 L3.7,3Z M0.3,5 L2,7 L3.7,5Z" fill="#222"/></svg>
<!-- toolbar icons -->
<svg class="a" style="left:97px;top:26px" width="10" height="8" viewBox="0 0 10 8"><rect x="0.5" y="0.5" width="9" height="7" fill="none" stroke="#222"/><path d="M1.5,6.5 L3.5,4 L5,5 L6,4 L8.5,6.5Z" fill="#222"/><rect x="6.5" y="2" width="1.3" height="1.3" fill="#222"/></svg>
<svg class="a" style="left:113px;top:25.5px" width="9" height="9" viewBox="0 0 9 9"><circle cx="4.5" cy="4.5" r="3.8" fill="#222"/><path d="M2.5,6.5 L6.5,2.5" stroke="#ddd" stroke-width="1.3"/></svg>
<svg class="a" style="left:129px;top:25px" width="9" height="9" viewBox="0 0 9 9"><path d="M0.6,1 H7.7 V3 H7 L6.4,2.3 H5.2 V6.9 H6.1 V7.7 H1.9 V6.9 H2.8 V2.3 H1.8 L1.3,3 H0.6Z" fill="#1e1e1e"/></svg>
<svg class="a" style="left:145.5px;top:26px" width="8" height="8" viewBox="0 0 8 8"><rect x="1" y="1" width="6" height="6" fill="none" stroke="#222" stroke-width="1"/><rect x="0" y="0" width="2" height="2" fill="#111"/><rect x="6" y="0" width="2" height="2" fill="#111"/><rect x="0" y="6" width="2" height="2" fill="#111"/><rect x="6" y="6" width="2" height="2" fill="#111"/></svg>
<svg class="a" style="left:161.5px;top:25px" width="9" height="9" viewBox="0 0 9 9"><rect x="3.5" y="0.5" width="5" height="5" fill="#fff" stroke="#222"/><rect x="0.5" y="3.5" width="5" height="5" fill="#222"/><rect x="1.5" y="5.5" width="2" height="2" fill="#fff"/></svg>
<div class="a" style="left:201px;top:24px;width:6px;height:11px;border:1px solid #9a9a9a;background:linear-gradient(#f4f4f4,#dcdcdc 45%,#a8a8a8 50%,#b4b4b4)"></div>
<div class="sep" style="top:38px"></div>
<!-- blend row -->
<div class="box" style="left:3px;top:43px;width:107px;height:12px"></div>
<div class="t" style="left:8.3px;top:44.6px;transform:scaleX(0.91)">Обычные</div>
<svg class="a" style="left:103px;top:45px" width="4" height="8" viewBox="0 0 4 8"><path d="M0.3,3 L2,1 L3.7,3Z M0.3,5 L2,7 L3.7,5Z" fill="#222"/></svg>
<div class="t" style="left:114.5px;top:44px;transform:scaleX(0.93)">Непрозрачность:</div>
<div class="box" style="left:171px;top:42px;width:36px;height:13px;background:#fff"></div>
<div class="a" style="left:194px;top:43px;width:12px;height:11px;background:linear-gradient(#fafafa,#e6e6e6);border-left:1px solid #b8b8b8"></div>
<svg class="a" style="left:198.5px;top:47.5px" width="4" height="2" viewBox="0 0 4 2"><path d="M0,0 H4 L2,2Z" fill="#222"/></svg>
<div class="t" style="left:173px;top:44px;transform:scaleX(0.96)">100%</div>
<div class="sep" style="top:57px"></div>
<!-- lock row -->
<div class="t" style="left:4.3px;top:63px;transform:scaleX(0.93)">Закрепить:</div>
<svg class="a" style="left:45.2px;top:63.8px" width="8" height="8" viewBox="0 0 8 8"><rect x="0" y="0" width="8" height="8" fill="#2a2a2a"/><rect x="1" y="1" width="2" height="2" fill="#fff"/><rect x="5" y="1" width="2" height="2" fill="#fff"/><rect x="3" y="3" width="2" height="2" fill="#fff"/><rect x="1" y="5" width="2" height="2" fill="#fff"/><rect x="5" y="5" width="2" height="2" fill="#fff"/></svg>
<svg class="a" style="left:59px;top:62px" width="11" height="10" viewBox="0 0 11 10"><path d="M10.5,0.5 L4.5,6.5" stroke="#222" stroke-width="1.2"/><path d="M5.2,6 C4,4.6 2,5 1.8,6.8 C1.6,8 1,8.6 0,9 C2,9.6 4.6,9.4 5.4,7.4Z" fill="#222"/></svg>
<svg class="a" style="left:74.5px;top:62.5px" width="9" height="9" viewBox="0 0 9 9"><path d="M4.5,0.5 V8.5 M0.5,4.5 H8.5" stroke="#222" stroke-width="1.2"/><path d="M4.5,0 L6.2,2 H2.8Z M4.5,9 L6.2,7 H2.8Z M0,4.5 L2,2.8 V6.2Z M9,4.5 L7,2.8 V6.2Z" fill="#222"/></svg>
<svg class="a" style="left:90px;top:63px" width="8" height="9" viewBox="0 0 8 9"><path d="M2,4 V2.6 A2,2 0 0 1 6,2.6 V4" fill="none" stroke="#222" stroke-width="1.3"/><rect x="0.5" y="4" width="7" height="5" fill="#222"/><rect x="3.5" y="5.5" width="1" height="2" fill="#ddd"/></svg>
<div class="t" style="left:140.5px;top:63px;transform:scaleX(0.93)">Заливка:</div>
<div class="box" style="left:171px;top:60.5px;width:36px;height:13px;background:#fff"></div>
<div class="a" style="left:194px;top:61.5px;width:12px;height:11px;background:linear-gradient(#fafafa,#e6e6e6);border-left:1px solid #b8b8b8"></div>
<svg class="a" style="left:198.5px;top:66px" width="4" height="2" viewBox="0 0 4 2"><path d="M0,0 H4 L2,2Z" fill="#222"/></svg>
<div class="t" style="left:173px;top:62.5px;transform:scaleX(0.96)">100%</div>
<div class="sep" style="top:77px;background:#bdbdbd"></div>
<!-- layer rows -->
<div class="row" style="top:78px;height:26px;background:#b5cdf6;border-bottom-color:#a9bad6">
  <div class="eyecol" style="height:26px;border-bottom:1px solid #bdbdbd"></div>
  <svg class="eye" viewBox="0 0 9 6"><ellipse cx="4.5" cy="3" rx="3.9" ry="2.4" fill="#a8a8a8" stroke="#2a2a2a" stroke-width="1.1"/><circle cx="4.5" cy="3" r="1.6" fill="#1a1a1a"/><circle cx="4.9" cy="2.5" r="0.5" fill="#aaa"/></svg>
  <div class="a" style="left:21px;top:0;width:25px;height:25px;background:#a9c2ef"></div>
  <div class="a" style="left:21px;top:0;width:7px;height:2px;background:#44506a"></div>
  <div class="a" style="left:21px;top:0;width:2px;height:7px;background:#44506a"></div>
  <div class="a" style="left:39px;top:0;width:7px;height:2px;background:#44506a"></div>
  <div class="a" style="left:44px;top:0;width:2px;height:7px;background:#44506a"></div>
  <div class="a" style="left:21px;top:23px;width:7px;height:2px;background:#44506a"></div>
  <div class="a" style="left:21px;top:18px;width:2px;height:7px;background:#44506a"></div>
  <div class="a" style="left:39px;top:23px;width:7px;height:2px;background:#44506a"></div>
  <div class="a" style="left:44px;top:18px;width:2px;height:7px;background:#44506a"></div>
  <div class="a" style="left:22.5px;top:1.5px;width:22px;height:22px;border:1px solid #4a4f5a;background:conic-gradient(#fff 25%,#d2d2d2 0 50%,#fff 0 75%,#d2d2d2 0) 0 0/5.25px 5.25px"></div>
  <div class="t" style="left:50.6px;top:8.8px;transform:scaleX(0.87)">Слой 2</div>
</div>
<div class="row" style="top:104px;height:27px">
  <div class="eyecol" style="height:26px"></div>
  <svg class="eye" viewBox="0 0 9 6"><ellipse cx="4.5" cy="3" rx="3.9" ry="2.4" fill="#a8a8a8" stroke="#2a2a2a" stroke-width="1.1"/><circle cx="4.5" cy="3" r="1.6" fill="#1a1a1a"/><circle cx="4.9" cy="2.5" r="0.5" fill="#aaa"/></svg>
  <div class="thumb" style="top:2px"></div>
  <div class="t" style="left:50.6px;top:9.3px;transform:scaleX(0.87)">Слой 1</div>
</div>
<div class="row" style="top:131px;height:26px">
  <div class="eyecol"></div>
  <svg class="eye" viewBox="0 0 9 6"><ellipse cx="4.5" cy="3" rx="3.9" ry="2.4" fill="#a8a8a8" stroke="#2a2a2a" stroke-width="1.1"/><circle cx="4.5" cy="3" r="1.6" fill="#1a1a1a"/><circle cx="4.9" cy="2.5" r="0.5" fill="#aaa"/></svg>
  <div class="thumb" style="top:1px">
    <svg class="a" style="left:0;top:0" width="20" height="20" viewBox="0 0 20 20"><g transform="translate(0.5,-0.6) scale(0.042)"><g fill="none" stroke="#aaa" stroke-width="14" stroke-dasharray="20 14"><g id="thb"><path d="M227.0,130.0 C221.3,130.0 215.5,129.9 210.0,131.0 C204.5,132.1 199.4,133.7 194.0,136.5 C188.6,139.3 182.9,145.0 177.3,148.0 C171.7,151.0 165.8,152.6 160.6,154.3 C155.4,156.1 149.9,156.9 145.9,158.5 C141.9,160.1 138.8,161.3 136.5,163.7 C134.2,166.1 133.4,169.4 132.3,173.1 C131.2,176.8 129.7,181.2 130.2,185.7 C130.7,190.2 132.9,196.1 135.5,200.3 C138.1,204.5 140.7,207.7 145.9,210.8 C151.1,213.9 160.1,217.3 166.8,219.1 C173.5,220.9 179.7,222.0 186.0,221.4 C192.3,220.8 199.2,218.2 204.5,215.5 C209.8,212.8 214.8,208.2 218.0,205.0 C221.2,201.8 222.3,198.5 223.5,196.0 C224.7,193.5 224.8,191.0 225.0,190.0"/><path d="M186.4,221.6 C188.7,224.3 192.1,228.8 196.0,231.3 C199.9,233.8 204.8,235.2 210.0,236.5 C215.2,237.8 221.3,238.8 227.0,238.8"/><path d="M142.5,211.0 C140.9,214.0 135.7,222.7 132.7,228.9 C129.7,235.1 126.7,242.0 124.3,248.0 C121.9,254.0 120.0,258.8 118.4,264.8 C116.8,270.8 115.6,277.2 114.8,284.0 C114.0,290.8 113.8,297.5 113.6,305.5 C113.4,313.5 113.1,324.4 113.4,331.8 C113.7,339.2 116.0,344.8 115.6,350.0 C115.2,355.2 113.4,358.2 110.9,362.9 C108.4,367.6 103.3,374.1 100.5,378.4 C97.7,382.7 95.6,384.9 94.1,388.8 C92.6,392.7 91.2,396.6 91.3,401.8 C91.4,407.0 91.7,413.9 94.7,420.0 C97.7,426.1 104.2,433.8 109.3,438.7 C114.4,443.6 120.0,447.2 125.3,449.3 C130.6,451.4 136.0,451.9 141.3,451.5 C146.6,451.1 149.7,449.7 157.3,446.7 C164.9,443.7 178.7,437.8 186.7,433.3 C194.7,428.9 201.0,425.3 205.3,420.0 C209.6,414.7 212.1,407.1 212.5,401.3 C212.9,395.5 211.0,391.2 208.0,385.3 C205.0,379.4 198.5,375.6 194.7,366.0 C190.9,356.4 187.0,340.0 185.2,327.8 C183.3,315.6 183.9,298.6 183.6,292.7"/><path d="M212.5,398.9 C214.9,398.9 224.6,398.9 227.0,398.9"/><path d="M76.8,316.0 C78.0,314.7 80.6,310.1 84.0,308.0 C87.4,305.9 92.2,303.3 97.0,303.2 C101.8,303.1 110.3,306.8 113.0,307.5"/><path d="M19.8,360.0 C20.0,356.3 20.1,353.1 20.6,350.0 C21.1,346.9 21.5,344.3 23.0,341.5 C24.5,338.7 28.4,336.1 29.8,333.0 C31.2,329.9 30.6,326.1 31.5,323.0 C32.5,319.9 33.4,317.2 35.5,314.5 C37.6,311.8 40.5,308.9 44.0,307.0 C47.5,305.1 52.5,303.7 56.7,303.4 C60.9,303.1 65.8,303.9 69.0,305.2 C72.2,306.5 74.7,308.9 76.0,311.0 C77.3,313.1 77.1,315.3 77.0,318.0 C76.9,320.7 76.1,323.9 75.3,327.4 C74.5,330.9 72.8,337.1 72.3,339.0"/><path d="M29.8,333.0 C30.1,334.3 30.2,338.5 31.5,341.0 C32.8,343.5 36.3,346.9 37.3,348.1"/><path d="M20.5,350.0 C20.5,351.2 20.5,354.4 20.6,357.0 C20.7,359.6 20.2,362.0 21.2,365.5 C22.2,369.0 25.0,373.7 26.7,378.2 C28.4,382.7 30.2,388.8 31.5,392.5 C32.8,396.2 32.3,397.8 34.7,400.5 C37.1,403.2 41.3,406.4 45.8,408.5 C50.3,410.6 56.5,412.3 61.8,413.2 C67.1,414.1 72.7,414.1 77.7,414.0 C82.7,413.9 89.6,412.8 92.0,412.5"/><path d="M112.0,420.0 C111.8,421.2 110.8,424.8 110.5,427.0 C110.2,429.2 110.0,431.2 110.3,433.0 C110.5,434.8 111.7,437.2 112.0,438.0"/><path d="M135.0,419.5 C134.8,420.9 133.3,425.1 133.5,428.0 C133.7,430.9 134.6,434.5 136.0,437.0 C137.4,439.5 139.7,441.3 142.0,443.0 C144.3,444.7 148.7,446.3 150.0,447.0"/></g><use href="#thb" transform="translate(454,0) scale(-1,1)"/><path d="M160.0,36.5 C157.2,37.8 155.0,38.8 153.0,40.2 C151.0,41.6 149.8,42.9 148.0,45.0 C146.2,47.1 144.0,50.0 142.0,53.0 C140.0,56.0 137.9,59.5 136.0,63.0 C134.1,66.5 132.3,69.7 130.6,74.2 C128.9,78.7 127.0,83.8 125.8,90.2 C124.6,96.6 123.7,106.2 123.4,112.5 C123.1,118.8 123.6,123.7 123.8,128.0 C124.0,132.3 123.7,134.4 124.6,138.4 C125.5,142.4 127.0,147.8 129.0,152.0 C131.0,156.2 135.2,161.8 136.5,163.7"/>
<path d="M227.0,19.0 C218.0,19.0 207.8,19.9 200.0,21.3 C192.2,22.7 185.0,25.7 180.0,27.5 C175.0,29.3 173.3,30.8 170.0,32.3 C166.7,33.8 162.8,35.2 160.0,36.5 C157.2,37.8 155.5,38.8 153.0,40.2 C150.5,41.6 148.0,42.9 145.0,44.7 C142.0,46.5 138.3,48.8 135.0,51.0 C131.7,53.2 127.9,55.9 125.0,58.0 C122.1,60.1 121.6,59.7 117.8,63.5 C114.0,67.3 106.7,74.8 101.9,80.6 C97.1,86.4 92.7,93.0 89.0,98.5 C85.3,104.0 82.3,109.4 80.0,113.5 C77.7,117.6 77.4,118.2 74.9,123.1 C72.4,128.0 67.3,138.2 65.1,142.7 C62.9,147.2 63.3,146.9 61.9,150.0 C60.5,153.1 58.2,157.5 56.4,161.0 C54.6,164.5 52.5,167.9 51.0,170.8 C49.5,173.7 48.4,175.9 47.7,178.5 C47.1,181.1 46.7,183.7 47.1,186.1 C47.5,188.5 48.4,190.8 49.9,192.7 C51.4,194.6 53.5,196.3 56.4,197.6 C59.3,198.9 63.8,200.2 67.4,200.4 C71.1,200.6 74.7,200.0 78.3,198.7 C81.9,197.4 86.5,194.9 89.3,192.7 C92.1,190.5 92.9,188.0 95.0,185.5 C97.1,183.0 99.8,180.5 101.9,177.8 C104.1,175.1 105.9,172.4 107.9,169.4 C109.9,166.4 111.9,163.5 113.9,159.9 C115.9,156.3 118.1,151.5 119.9,147.9 C121.7,144.3 123.8,140.0 124.6,138.4"/><path d="M288.0,33.8 C292.0,35.9 295.9,38.5 299.0,40.6 C302.1,42.7 304.2,44.4 306.5,46.5 C308.8,48.6 310.1,49.4 312.7,53.5 C315.3,57.6 319.8,65.2 322.3,71.1 C324.8,76.9 326.6,81.7 327.9,88.6 C329.2,95.5 330.0,106.4 330.3,112.5 C330.6,118.6 330.2,121.0 329.9,125.0 C329.6,129.0 329.7,132.4 328.7,136.5 C327.7,140.6 326.0,145.2 324.0,149.5 C322.0,153.8 317.9,159.9 316.7,162.0"/>
<path d="M227.0,19.2 C233.0,19.5 239.5,20.2 245.0,21.0 C250.5,21.8 255.0,22.8 260.0,24.0 C265.0,25.2 270.3,26.4 275.0,28.0 C279.7,29.6 284.0,31.8 288.0,33.8 C292.0,35.8 294.4,37.6 299.0,40.2 C303.6,42.8 310.2,45.5 315.9,49.5 C321.6,53.5 326.5,57.1 333.3,64.0 C340.1,70.9 350.0,81.8 356.7,90.7 C363.4,99.6 367.8,108.1 373.3,117.3 C378.8,126.5 385.5,138.4 389.5,146.0 C393.5,153.6 395.2,158.2 397.5,163.0 C399.8,167.8 401.5,171.6 403.0,175.0 C404.5,178.4 406.1,180.7 406.3,183.5 C406.6,186.3 405.8,189.5 404.5,191.7 C403.2,193.8 401.1,195.1 398.5,196.4 C395.9,197.7 391.9,198.9 388.9,199.4 C385.9,199.9 383.4,199.9 380.6,199.4 C377.8,198.9 375.2,197.8 372.2,196.4 C369.1,195.0 365.2,193.3 362.3,191.2 C359.4,189.1 357.4,186.7 354.9,183.7 C352.4,180.7 349.9,177.3 347.4,173.3 C344.9,169.3 342.2,163.9 340.0,159.9 C337.8,155.9 335.9,153.3 334.0,149.4 C332.1,145.5 329.6,138.7 328.7,136.5"/></g><path fill="#000" d="M227,130 C250,130 263,140 263,160 C263,174 251,191 227,191 C203,191 191,174 191,160 C191,140 204,130 227,130 Z"/><circle cx="192" cy="119" r="16" fill="#222"/><circle cx="262" cy="119" r="16" fill="#222"/></g></svg>
  </div>
  <div class="t" style="left:51px;top:8.5px;font-style:italic;transform:scaleX(0.93)">Фон</div>
</div>

</div>
<div class="a" style="left:14px;top:14px;width:1px;height:474px;background:rgba(0,0,0,.5)"></div>
<div class="a" style="left:15px;top:14px;width:571px;height:1px;background:rgba(0,0,0,.5)"></div>
<div class="a" style="left:585px;top:15px;width:1px;height:473px;background:rgba(0,0,0,.3)"></div>
<div class="a" style="left:15px;top:487px;width:570px;height:1px;background:rgba(0,0,0,.3)"></div>
<div class="a" style="left:442px;top:15px;width:1px;height:190px;background:rgba(255,255,255,.5)"></div>
<div class="a" style="left:15px;top:461px;width:353px;height:1px;background:rgba(255,255,255,.5)"></div>
</div></body></html>
